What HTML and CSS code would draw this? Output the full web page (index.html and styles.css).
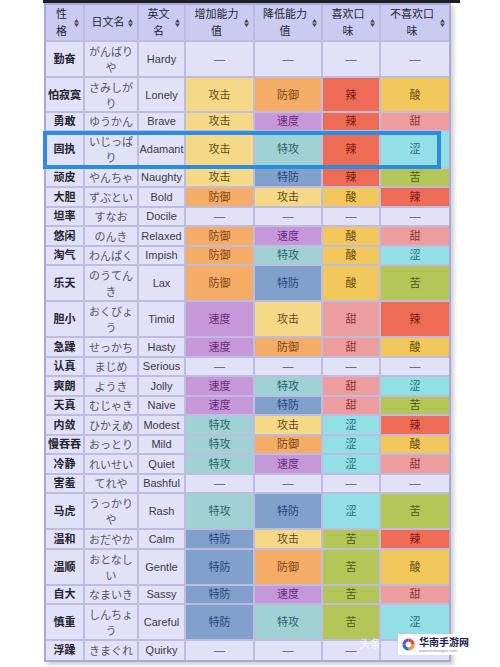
FILE: index.html
```html
<html>
<head>
    <title>性格一览</title>
    <link rel="stylesheet" href="styles.css">
</head>
<body>
<div class="page">
    <div class="topbar"></div>
    <div class="natures">
        <div class="h"><span>性<br>格</span><svg viewBox="0 0 5 8"><path d="M2.5 0L5 3.4H0Z M0 4.6H5L2.5 8Z"/></svg></div>
        <div class="h"><span>日文名</span><svg viewBox="0 0 5 8"><path d="M2.5 0L5 3.4H0Z M0 4.6H5L2.5 8Z"/></svg></div>
        <div class="h"><span>英文<br>名</span><svg viewBox="0 0 5 8"><path d="M2.5 0L5 3.4H0Z M0 4.6H5L2.5 8Z"/></svg></div>
        <div class="h"><span>增加能力<br>值</span><svg viewBox="0 0 5 8"><path d="M2.5 0L5 3.4H0Z M0 4.6H5L2.5 8Z"/></svg></div>
        <div class="h"><span>降低能力<br>值</span><svg viewBox="0 0 5 8"><path d="M2.5 0L5 3.4H0Z M0 4.6H5L2.5 8Z"/></svg></div>
        <div class="h"><span>喜欢口<br>味</span><svg viewBox="0 0 5 8"><path d="M2.5 0L5 3.4H0Z M0 4.6H5L2.5 8Z"/></svg></div>
        <div class="h"><span>不喜欢口<br>味</span><svg viewBox="0 0 5 8"><path d="M2.5 0L5 3.4H0Z M0 4.6H5L2.5 8Z"/></svg></div>

        <div class="c nm">勤奋</div><div class="c jp">がんばりや</div><div class="c en">Hardy</div>
        <div class="c na">—</div><div class="c na">—</div><div class="c na">—</div><div class="c na">—</div>

        <div class="c nm">怕寂寞</div><div class="c jp">さみしがり</div><div class="c en">Lonely</div>
        <div class="c atk">攻击</div><div class="c def">防御</div><div class="c spicy">辣</div><div class="c sour">酸</div>

        <div class="c nm">勇敢</div><div class="c jp">ゆうかん</div><div class="c en">Brave</div>
        <div class="c atk">攻击</div><div class="c spe">速度</div><div class="c spicy">辣</div><div class="c sweet">甜</div>

        <div class="c nm">固执</div><div class="c jp">いじっぱり</div><div class="c en">Adamant</div>
        <div class="c atk">攻击</div><div class="c spa">特攻</div><div class="c spicy">辣</div><div class="c dry">涩</div>

        <div class="c nm">顽皮</div><div class="c jp">やんちゃ</div><div class="c en">Naughty</div>
        <div class="c atk">攻击</div><div class="c sdf">特防</div><div class="c spicy">辣</div><div class="c bitter">苦</div>

        <div class="c nm">大胆</div><div class="c jp">ずぶとい</div><div class="c en">Bold</div>
        <div class="c def">防御</div><div class="c atk">攻击</div><div class="c sour">酸</div><div class="c spicy">辣</div>

        <div class="c nm">坦率</div><div class="c jp">すなお</div><div class="c en">Docile</div>
        <div class="c na">—</div><div class="c na">—</div><div class="c na">—</div><div class="c na">—</div>

        <div class="c nm">悠闲</div><div class="c jp">のんき</div><div class="c en">Relaxed</div>
        <div class="c def">防御</div><div class="c spe">速度</div><div class="c sour">酸</div><div class="c sweet">甜</div>

        <div class="c nm">淘气</div><div class="c jp">わんぱく</div><div class="c en">Impish</div>
        <div class="c def">防御</div><div class="c spa">特攻</div><div class="c sour">酸</div><div class="c dry">涩</div>

        <div class="c nm">乐天</div><div class="c jp">のうてんき</div><div class="c en">Lax</div>
        <div class="c def">防御</div><div class="c sdf">特防</div><div class="c sour">酸</div><div class="c bitter">苦</div>

        <div class="c nm">胆小</div><div class="c jp">おくびょう</div><div class="c en">Timid</div>
        <div class="c spe">速度</div><div class="c atk">攻击</div><div class="c sweet">甜</div><div class="c spicy">辣</div>

        <div class="c nm">急躁</div><div class="c jp">せっかち</div><div class="c en">Hasty</div>
        <div class="c spe">速度</div><div class="c def">防御</div><div class="c sweet">甜</div><div class="c sour">酸</div>

        <div class="c nm">认真</div><div class="c jp">まじめ</div><div class="c en">Serious</div>
        <div class="c na">—</div><div class="c na">—</div><div class="c na">—</div><div class="c na">—</div>

        <div class="c nm">爽朗</div><div class="c jp">ようき</div><div class="c en">Jolly</div>
        <div class="c spe">速度</div><div class="c spa">特攻</div><div class="c sweet">甜</div><div class="c dry">涩</div>

        <div class="c nm">天真</div><div class="c jp">むじゃき</div><div class="c en">Naive</div>
        <div class="c spe">速度</div><div class="c sdf">特防</div><div class="c sweet">甜</div><div class="c bitter">苦</div>

        <div class="c nm">内敛</div><div class="c jp">ひかえめ</div><div class="c en">Modest</div>
        <div class="c spa">特攻</div><div class="c atk">攻击</div><div class="c dry">涩</div><div class="c spicy">辣</div>

        <div class="c nm">慢吞吞</div><div class="c jp">おっとり</div><div class="c en">Mild</div>
        <div class="c spa">特攻</div><div class="c def">防御</div><div class="c dry">涩</div><div class="c sour">酸</div>

        <div class="c nm">冷静</div><div class="c jp">れいせい</div><div class="c en">Quiet</div>
        <div class="c spa">特攻</div><div class="c spe">速度</div><div class="c dry">涩</div><div class="c sweet">甜</div>

        <div class="c nm">害羞</div><div class="c jp">てれや</div><div class="c en">Bashful</div>
        <div class="c na">—</div><div class="c na">—</div><div class="c na">—</div><div class="c na">—</div>

        <div class="c nm">马虎</div><div class="c jp">うっかりや</div><div class="c en">Rash</div>
        <div class="c spa">特攻</div><div class="c sdf">特防</div><div class="c dry">涩</div><div class="c bitter">苦</div>

        <div class="c nm">温和</div><div class="c jp">おだやか</div><div class="c en">Calm</div>
        <div class="c sdf">特防</div><div class="c atk">攻击</div><div class="c bitter">苦</div><div class="c spicy">辣</div>

        <div class="c nm">温顺</div><div class="c jp">おとなしい</div><div class="c en">Gentle</div>
        <div class="c sdf">特防</div><div class="c def">防御</div><div class="c bitter">苦</div><div class="c sour">酸</div>

        <div class="c nm">自大</div><div class="c jp">なまいき</div><div class="c en">Sassy</div>
        <div class="c sdf">特防</div><div class="c spe">速度</div><div class="c bitter">苦</div><div class="c sweet">甜</div>

        <div class="c nm">慎重</div><div class="c jp">しんちょう</div><div class="c en">Careful</div>
        <div class="c sdf">特防</div><div class="c spa">特攻</div><div class="c bitter">苦</div><div class="c dry">涩</div>

        <div class="c nm">浮躁</div><div class="c jp">きまぐれ</div><div class="c en">Quirky</div>
        <div class="c na">—</div><div class="c na">—</div><div class="c na">—</div><div class="c na">—</div>
    </div>

    <!-- annotation drawn over the 固执 row -->
    <div class="mark-box"></div>

    <div class="toutiao">头条</div>
    <div class="watermark">
        <svg class="wm-logo" viewBox="0 0 16 16">
            <circle cx="8" cy="8" r="7.5" fill="#fff" stroke="#d8d8e8" stroke-width="0.8"/>
            <path d="M8 1.5A6.5 6.5 0 0 1 14.5 8H11A3 3 0 0 0 8 5Z" fill="#e8432f"/>
            <path d="M14.5 8A6.5 6.5 0 0 1 8 14.5V11A3 3 0 0 0 11 8Z" fill="#f39a1e"/>
            <path d="M8 14.5A6.5 6.5 0 0 1 1.5 8H5A3 3 0 0 0 8 11Z" fill="#2a6fd6"/>
            <path d="M1.5 8A6.5 6.5 0 0 1 8 1.5V5A3 3 0 0 0 5 8Z" fill="#7a4fc8"/>
        </svg>
        <div class="wm-text">
            <div class="wm-name">华南手游网</div>
            <div class="wm-url">www.hnshouyou.com</div>
        </div>
    </div>
</div>
</body>
</html>
```
FILE: styles.css
```css
* { margin: 0; padding: 0; box-sizing: border-box; }
body { background: #fff; font-family: "Liberation Sans", "Noto Sans CJK SC", sans-serif; }
.page { position: relative; width: 500px; height: 667px; overflow: hidden; }
.topbar { height: 3px; margin: 0 40px 0 43px; background: #1e1e24; }

.natures {
    display: grid;
    grid-template-columns: 37px 52px 45px 67px 66px 56px 68px;
    grid-template-rows: 35px 34px 33px 16.5px 35px 17.5px 17.5px 17.5px 17.5px 17.5px 34px 34px 17.5px 17.5px 17.5px 17.5px 17.5px 17.5px 17.5px 17.5px 34px 17.5px 34px 17.5px 34px 18.5px;
    gap: 2px;
    width: 407px;
    margin-left: 44px;
    border: 2px solid #a9a8d6;
    background: #bebde0;
    box-shadow: 3px 3px 4px rgba(0, 0, 0, 0.18);
}

.h { display: flex; align-items: center; padding: 0 4px 0 3px; background: #cbcbf2; color: #25252f; font-size: 11px; line-height: 17px; }
.h span { flex: 1; text-align: center; }
.h svg { flex: none; width: 5px; height: 8px; fill: #4a4a55; }

.c { display: flex; align-items: center; justify-content: center; text-align: center; font-size: 11px; line-height: 16px; background: #e1e1f8; color: #333; }
.nm { font-weight: bold; color: #24242c; }
.jp { padding: 0 2px; font-family: "Noto Sans CJK JP", sans-serif; color: #55555f; }
.en { color: #3a3a44; }
.na { color: #55555f; }

/* stats */
.atk { background: #f5d987; color: #5e4b1c; }
.def { background: #f5ac66; color: #7a4416; }
.spe { background: #c698d9; color: #6b2a7c; }
.spa { background: #a0d2d5; color: #2a5f66; }
.sdf { background: #82a0cc; color: #26457a; }

/* flavours */
.spicy { background: #ee6c55; color: #7c1e10; }
.sour { background: #f2c75c; color: #6a4e10; }
.sweet { background: #ee9d9e; color: #8a3434; }
.dry { background: #93dfe6; color: #1e6a72; }
.bitter { background: #b5c659; color: #4d5a10; }

.mark-box { position: absolute; left: 43px; top: 131px; width: 398px; height: 38px; border: 4px solid #2b8ce0; }

.toutiao { position: absolute; left: 359px; top: 637px; font-size: 11px; line-height: 13px; color: rgba(255, 255, 255, 0.8); font-family: "Noto Sans CJK SC", sans-serif; }
.watermark { position: absolute; left: 398px; top: 634px; width: 79px; height: 21px; display: flex; align-items: center; gap: 3px; padding: 0 2px 0 3px; background: #fff; }
.wm-logo { width: 15px; height: 15px; flex: none; }
.wm-text { display: flex; flex-direction: column; white-space: nowrap; }
.wm-name { font-family: "Noto Sans CJK SC", sans-serif; font-weight: bold; font-size: 10px; line-height: 12px; color: #1b2452; }
.wm-url { font-size: 4px; line-height: 5px; color: #888; }
```
